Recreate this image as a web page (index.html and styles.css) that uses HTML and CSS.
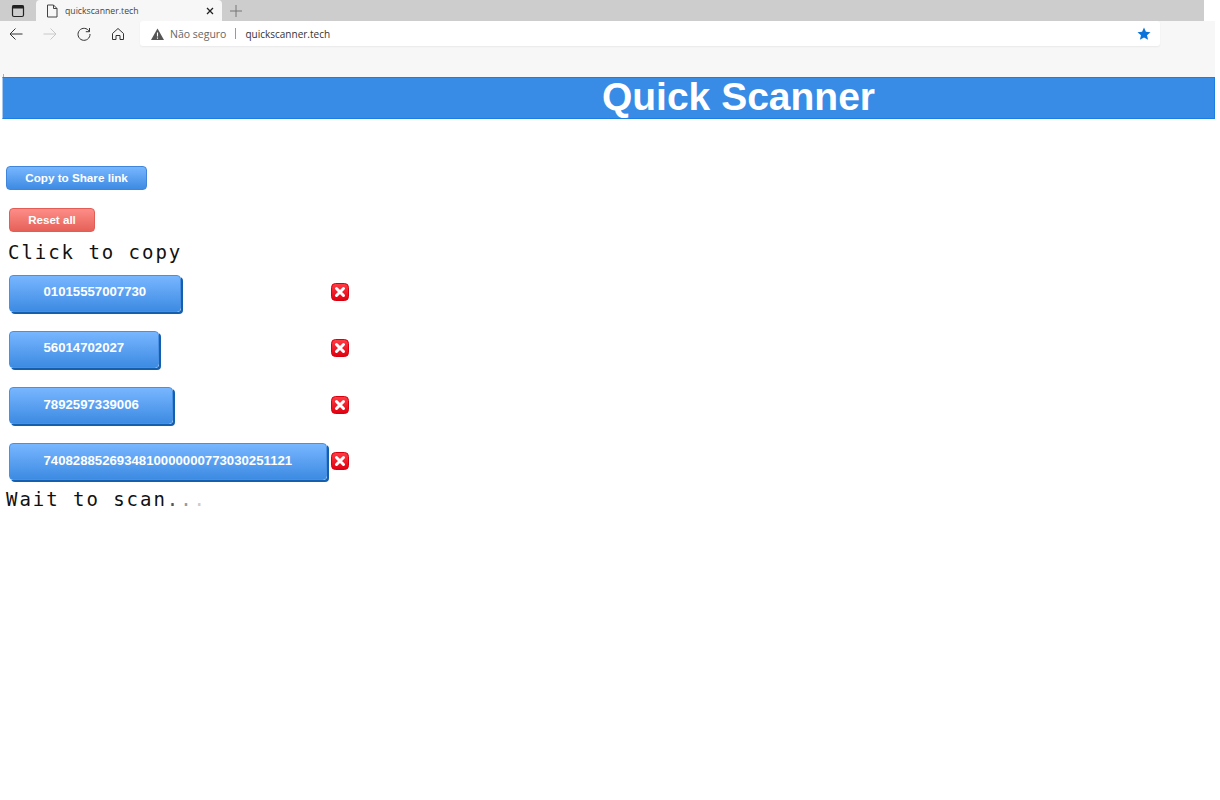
FILE: index.html
```html
<!DOCTYPE html>
<html lang="pt">
<head>
<meta charset="utf-8">
<title>quickscanner.tech</title>
<link rel="stylesheet" href="styles.css">
</head>
<body>
<div class="tabstrip">
  <div class="tab-menu">
    <svg width="14" height="14" viewBox="0 0 14 14"><rect x="1.500" y="1.500" width="11" height="11" rx="1.500" fill="none" stroke="#222" stroke-width="1.200"/><rect x="1.500" y="1.500" width="11" height="3" fill="#222"/></svg>
  </div>
  <div class="tab">
    <svg class="tab-doc" width="12" height="14" viewBox="0 0 12 14"><path d="M1.500 1h6l3.500 3.500V13h-9.500z M7.500 1v3.500H11" fill="none" stroke="#444" stroke-width="1"/></svg>
    <span class="tab-title">quickscanner.tech</span>
    <svg class="tab-close" width="10" height="10" viewBox="0 0 10 10"><path d="M2 2l6 6M8 2l-6 6" stroke="#222" stroke-width="1.300"/></svg>
  </div>
  <svg class="tab-new" width="14" height="14" viewBox="0 0 14 14"><path d="M7 1v12M1 7h12" stroke="#777" stroke-width="1"/></svg>
</div>
<div class="toolbar">
  <div class="nav">
    <svg width="14" height="14" viewBox="0 0 14 14"><path d="M13.500 7H1M6.500 1.500L1 7l5.500 5.500" fill="none" stroke="#333" stroke-width="1"/></svg>
    <svg width="14" height="14" viewBox="0 0 14 14"><path d="M.5 7H13M7.500 1.500L13 7l-5.500 5.500" fill="none" stroke="#c8c8c8" stroke-width="1"/></svg>
    <svg width="14" height="14" viewBox="0 0 14 14"><path d="M12.300 4.500A6 6 0 1 0 13 7M12.500 1v3.700H8.800" fill="none" stroke="#333" stroke-width="1"/></svg>
    <svg width="14" height="14" viewBox="0 0 14 14"><path d="M1.500 6.500L7 1.500l5.500 5v6h-3.500V8.500H5v4H1.500z" fill="none" stroke="#333" stroke-width="1"/></svg>
  </div>
  <div class="address">
    <svg width="13" height="12" viewBox="0 0 13 12"><path d="M6.500 0.500L13 12H0z" fill="#555"/><path d="M6.500 4.500v4M6.500 9.500v1.200" stroke="#fff" stroke-width="1.100"/></svg>
    <span class="insecure">Não seguro</span>
    <span class="divider"></span>
    <span class="url">quickscanner.tech</span>
    <svg class="star" width="14" height="14" viewBox="0 0 14 14"><path d="M7 .5l1.900 4.300 4.600.4-3.500 3 1.100 4.600L7 10.400l-4.100 2.400L4 8.200l-3.500-3 4.600-.4z" fill="#0a74da"/></svg>
  </div>
</div>
<header class="banner"><h1 class="banner-title">Quick Scanner</h1></header>
<main class="content">
  <button class="btn btn-blue btn-share" type="button">Copy to Share link</button>
  <button class="btn btn-red btn-reset" type="button">Reset all</button>
  <p class="mono click-label">Click to copy</p>
  <ul class="codes">
    <li class="code-row"><div class="code-cell"><button class="code" type="button">01015557007730</button></div><span class="remove"><svg width="18" height="18" viewBox="0 0 18 18"><use href="#x-icon"/></svg></span></li>
    <li class="code-row"><div class="code-cell"><button class="code" type="button">56014702027</button></div><span class="remove"><svg width="18" height="18" viewBox="0 0 18 18"><use href="#x-icon"/></svg></span></li>
    <li class="code-row"><div class="code-cell"><button class="code" type="button">7892597339006</button></div><span class="remove"><svg width="18" height="18" viewBox="0 0 18 18"><use href="#x-icon"/></svg></span></li>
    <li class="code-row"><div class="code-cell"><button class="code" type="button">7408288526934810000000773030251121</button></div><span class="remove"><svg width="18" height="18" viewBox="0 0 18 18"><use href="#x-icon"/></svg></span></li>
  </ul>
  <p class="mono wait-label">Wait to scan<span class="d1">.</span><span class="d2">.</span><span class="d3">.</span></p>
</main>
<svg class="defs" width="0" height="0">
  <defs>
    <linearGradient id="x-grad" x1="0" y1="0" x2="0" y2="1"><stop offset="0" stop-color="#ff3d45"/><stop offset="1" stop-color="#e00010"/></linearGradient>
    <symbol id="x-icon" viewBox="0 0 18 18">
      <rect x="0.500" y="0.500" width="17" height="17" rx="4" fill="url(#x-grad)" stroke="#d8000e"/>
      <path d="M5.500 5.500l7 7M12.500 5.500l-7 7" stroke="#fff" stroke-width="3" stroke-linecap="round"/>
    </symbol>
  </defs>
</svg>
</body>
</html>
```
FILE: styles.css
```css
* { box-sizing: border-box; }
html, body { margin: 0; padding: 0; background: #fff; }
body { font-family: "Liberation Sans", Arial, sans-serif; width: 1220px; height: 800px; overflow: hidden; }

.tabstrip { width: 1204px; height: 21px; background: #cdcdcd; display: flex; align-items: center; }
.tab-menu { width: 36px; height: 21px; display: flex; align-items: center; justify-content: center; }
.tab { width: 186px; height: 21px; background: #f7f7f7; border-radius: 4px 4px 0 0; display: flex; align-items: center; padding: 0 7px 0 10px; }
.tab-doc { flex: none; }
.tab-title { margin-left: 7px; font: 8.700px "Open Sans", sans-serif; color: #444; flex: 1; }
.tab-close { flex: none; }
.tab-new { margin-left: 7px; }

.toolbar { width: 1215px; height: 56px; background: #f7f7f7; display: flex; align-items: flex-start; }
.nav { width: 140px; height: 25px; padding-left: 9px; display: flex; align-items: center; gap: 20px; }
.address { width: 1020px; height: 25px; background: #fff; border-radius: 3px; display: flex; align-items: center; padding: 0 9px 0 11px; box-shadow: 0 1px 2px rgba(0,0,0,.06); }
.insecure { margin-left: 6px; font: 10.500px "Open Sans", sans-serif; color: #666; }
.divider { width: 1px; height: 11px; background: #999; margin: 0 9px; }
.url { font: 10px "Open Sans", sans-serif; color: #333; flex: 1; }
.star { flex: none; }

.banner { position: relative; margin-left: 2px; width: 1213px; height: 42px; background: #388ce6; border: 1px solid #1a7ee4; border-left-color: #a9c8ee; display: flex; align-items: center; justify-content: center; padding: 0 0 3px 260px; }
.banner::before { content: ""; position: absolute; left: 0; top: -4px; width: 1px; height: 3px; background: #8fb4e0; }
.banner-title { margin: 0; font-size: 39px; line-height: 36px; font-weight: 700; color: #fff; }

.content { padding-top: 47px; display: flex; flex-direction: column; align-items: flex-start; }
.btn { font-family: "Liberation Sans", Arial, sans-serif; font-weight: 700; color: #fff; border-radius: 4px; padding: 0 0 2px; height: 24px; }
.btn-blue { font-size: 11.700px; background: linear-gradient(#78b6ff, #3d8be3); border: 1px solid #3f86da; }
.btn-red { font-size: 11.600px; background: linear-gradient(#fd8d88, #e66158); border: 1px solid #e25d56; }
.btn-share { margin-left: 6px; width: 141px; }
.btn-reset { margin: 18px 0 0 9px; width: 86px; }

.mono { margin: 0; font-family: "DejaVu Sans Mono", monospace; font-size: 19px; letter-spacing: 1.960px; line-height: 24px; color: #111; }
.click-label { margin: 8px 0 0 8px; }
.codes { list-style: none; margin: 10.500px 0 0 9px; padding: 0; }
.code-row { display: flex; align-items: flex-start; height: 38px; margin-bottom: 18.250px; }
.code-row:last-child { margin-bottom: 0; }
.code-cell { width: 322px; }
.code { display: block; height: 37px; padding: 0 33.500px 3px; border: 1px solid #4a90e2; border-radius: 4px; font-family: "Liberation Sans", Arial, sans-serif; font-size: 13.200px; font-weight: 700; color: #fff; background: linear-gradient(#78b6ff, #3d8be3); box-shadow: 2px 2px 0 #145fae; }
.remove { display: block; width: 18px; height: 18px; margin-top: 8.500px; }
.remove svg { display: block; }
.wait-label { margin: 5.750px 0 0 6px; }
.d1 { color: #555; }
.d2 { color: #999; }
.d3 { color: #ccc; }
.defs { position: absolute; }
```
